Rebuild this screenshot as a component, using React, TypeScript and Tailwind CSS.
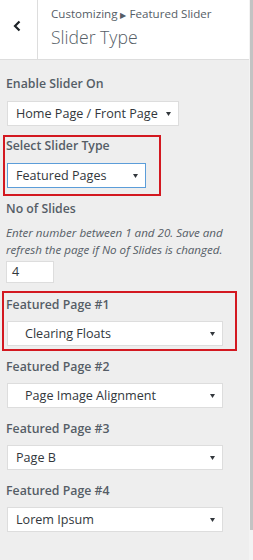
import React from "react";
import clsx from "clsx";

// small dropdown caret used by every select
function Caret() {
  return (
    <svg width="5" height="4" viewBox="0 0 5 4" className="shrink-0">
      <path d="M0 0H5L2.5 4Z" fill="#32373c" />
    </svg>
  );
}

function Label({ children, className }: { children: React.ReactNode; className?: string }) {
  return (
    <div className={clsx("h-[18px] text-[12.3px] leading-[18px] font-semibold text-[#555d66]", className)}>
      {children}
    </div>
  );
}

function Select({
  value,
  className,
  indent = false,
  focused = false,
}: {
  value: string;
  className?: string;
  indent?: boolean;
  focused?: boolean;
}) {
  return (
    <div
      className={clsx(
        "ml-[1px] flex h-[25px] items-center justify-between border bg-white pl-[8px] pr-[7px] text-[12.6px] text-[#32373c]",
        focused ? "border-[#5b9dd9]" : "border-[#dddddd]",
        className
      )}
    >
      <span className={clsx("whitespace-nowrap leading-[23px]", indent && "pl-[9px]")}>{value}</span>
      <Caret />
    </div>
  );
}

const pages = [
  { label: "Featured Page #1", value: "Clearing Floats", indent: true },
  { label: "Featured Page #2", value: "Page Image Alignment", indent: true },
  { label: "Featured Page #3", value: "Page B", indent: false },
  { label: "Featured Page #4", value: "Lorem Ipsum", indent: false },
];

export default function App() {
  return (
    <div className="relative flex h-[560px] w-[253px] overflow-hidden bg-[#eeeeee] font-['Open_Sans',sans-serif]">
      <div className="flex-1">
        {/* header */}
        <div className="flex h-[60px] border-b border-[#dddddd] bg-white">
          <div className="flex w-[38px] shrink-0 items-center justify-center border-r border-[#dddddd]">
            <svg width="10" height="12" viewBox="0 0 10 12" className="-mt-[7px] -ml-[3px]">
              <polyline points="7.5,1.5 3,6 7.5,10.5" fill="none" stroke="#1d2327" strokeWidth="2.2" />
            </svg>
          </div>
          <div className="pl-[13px] pt-[5px] text-[#555d66]">
            <div className="h-[18px] whitespace-nowrap text-[11.6px] leading-[18px]">
              Customizing <span className="text-[8px]">▶</span> Featured Slider
            </div>
            <div className="mt-[2px] h-[24px] whitespace-nowrap text-[17.6px] font-light leading-[24px]">
              Slider Type
            </div>
          </div>
        </div>

        {/* controls */}
        <div className="pl-[6px] pt-[15px]">
          <Label>Enable Slider On</Label>
          <Select value="Home Page / Front Page" className="mt-[8px] w-[172px]" />

          <Label className="mt-[11px]">Select Slider Type</Label>
          <Select value="Featured Pages" className="mt-[8px] w-[139px]" focused />

          <Label className="mt-[12px]">No of Slides</Label>
          <div className="mt-[6px] whitespace-nowrap text-[11.6px] italic leading-[17px] text-[#555d66]">
            Enter number between 1 and 20. Save and
            <br />
            refresh the page if No of Slides is changed.
          </div>
          <div className="mt-[3px] flex h-[22px] w-[48px] items-center border border-[#dddddd] bg-white pl-[5px] text-[12.6px] text-[#32373c]">
            4
          </div>

          {pages.map((p, i) => (
            <div key={p.label} className={i === 0 ? "mt-[13px]" : "mt-[12px]"}>
              <Label>{p.label}</Label>
              <Select value={p.value} indent={p.indent} className="mt-[7px] w-[216px]" />
            </div>
          ))}
        </div>
      </div>

      {/* scrollbar */}
      <div className="w-[4px] shrink-0 bg-[#f3f3f3]">
        <div className="ml-[1px] h-[530px] w-[3px] bg-[#c3c3c3]" />
      </div>

      {/* red annotation boxes */}
      <div className="absolute left-[3px] top-[135px] h-[61px] w-[158px] border-2 border-[#d31820]" />
      <div className="absolute left-[2px] top-[291px] h-[60px] w-[235px] border-2 border-[#d31820]" />
    </div>
  );
}
